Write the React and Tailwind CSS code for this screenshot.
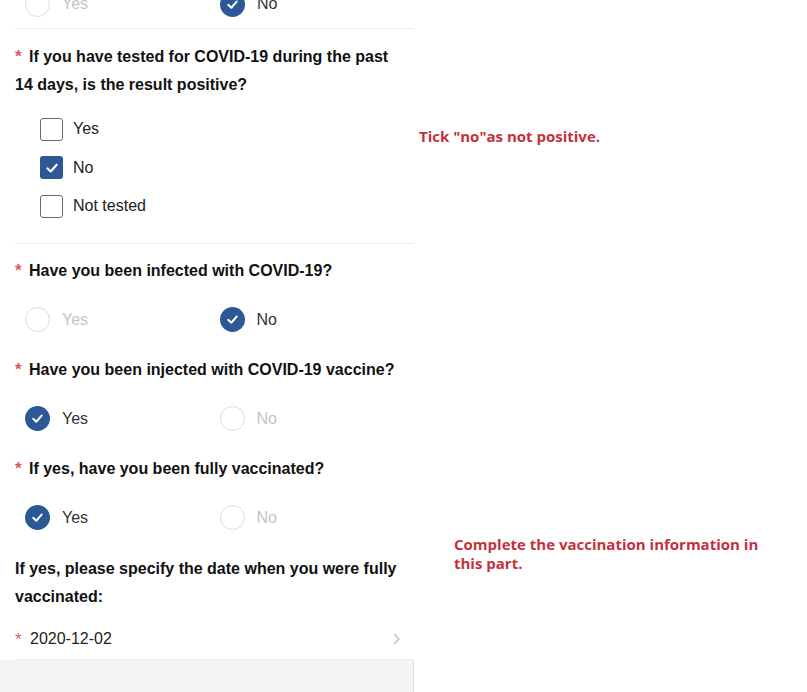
import React from "react";

const BLUE = "bg-[#2c5896]";

function Check({ size = 12 }) {
  return (
    <svg width={size} height={size} viewBox="0 0 12 12" fill="none">
      <path d="M2 6.3 L4.9 9 L10 3.2" stroke="white" strokeWidth="1.8" strokeLinecap="round" strokeLinejoin="round" />
    </svg>
  );
}

function Star({ cls = "" }) {
  return (
    <span className={"inline-block w-[14px] text-[#df5656] text-[17px] " + cls}>*</span>
  );
}

function Radio({ label, checked }) {
  return (
    <div className="w-[195px] flex items-center">
      {checked ? (
        <span className={"w-[25px] h-[25px] rounded-full flex items-center justify-center " + BLUE}>
          <Check size={13} />
        </span>
      ) : (
        <span className="w-[25px] h-[25px] rounded-full border border-[#dcdcdc] bg-white" />
      )}
      <span className={"ml-[12px] text-[16px] " + (checked ? "text-[#333]" : "text-[#c4c4c4]")}>{label}</span>
    </div>
  );
}

function RadioRow({ yes, className = "" }) {
  return (
    <div className={"flex items-center pl-[25px] h-[50px] " + className}>
      <Radio label="Yes" checked={yes} />
      <Radio label="No" checked={!yes} />
    </div>
  );
}

function CheckBox({ label, checked }) {
  return (
    <div className="flex items-center h-[38.5px] pl-[40px]">
      {checked ? (
        <span className={"w-[23px] h-[23px] rounded-[3px] flex items-center justify-center " + BLUE}>
          <Check size={14} />
        </span>
      ) : (
        <span className="w-[23px] h-[23px] rounded-[3px] border border-[#666] bg-white" />
      )}
      <span className="ml-[10px] text-[16px] text-[#222]">{label}</span>
    </div>
  );
}

function Question({ children, star = true, className = "" }) {
  return (
    <p className={"px-[15px] text-[16px] font-bold leading-[28px] text-[#111] " + className}>
      {star && <Star />}
      {children}
    </p>
  );
}

export default function App() {
  return (
    <div
      className="w-[807px] h-[692px] overflow-hidden bg-white flex"
      style={{ fontFamily: '"Liberation Sans", Arial, sans-serif' }}
    >
      <div className="w-[414px] flex flex-col shrink-0">
        <div className="-mt-[20px] h-[49px] ml-[15px] border-b border-[#ececec] flex items-center">
          <div className="-ml-[15px] flex">
            <RadioRow yes={false} className="h-[48px]" />
          </div>
        </div>
        <Question className="pt-[14px]">If you have tested for COVID-19 during the past 14 days, is the result positive?</Question>
        <div className="pt-[11px] pb-[17px] ml-[15px] border-b border-[#ececec]">
          <div className="-ml-[15px]">
            <CheckBox label="Yes" />
            <CheckBox label="No" checked />
            <CheckBox label="Not tested" />
          </div>
        </div>
        <Question className="pt-[13px]">Have you been infected with COVID-19?</Question>
        <RadioRow yes={false} className="mt-[10px]" />
        <Question className="pt-[11px]">Have you been injected with COVID-19 vaccine?</Question>
        <RadioRow yes={true} className="mt-[10px]" />
        <Question className="pt-[11px]">If yes, have you been fully vaccinated?</Question>
        <RadioRow yes={true} className="mt-[10px]" />
        <Question className="pt-[12px]" star={false}>If yes, please specify the date when you were fully vaccinated:</Question>
        <div className="mt-[9px] h-[40px] ml-[15px] pr-[13px] border-b border-[#ececec] flex items-center justify-between">
          <div className="flex items-center">
            <Star cls="w-[15px] relative top-[1px]" />
            <span className="text-[16px] text-[#222]">2020-12-02</span>
          </div>
          <svg width="8" height="12" viewBox="0 0 8 12" fill="none">
            <path d="M1.5 1.5 L6 6 L1.5 10.5" stroke="#c2c2c2" strokeWidth="1.5" strokeLinecap="round" strokeLinejoin="round" />
          </svg>
        </div>
        <div className="flex-1 bg-[#f4f4f4] border-r border-[#e2e2e2]" />
      </div>
      <div
        className="flex-1 flex flex-col text-[#c5303c] font-bold text-[15px] leading-[19px]"
        style={{ fontFamily: '"Open Sans", "Noto Sans", sans-serif' }}
      >
        <p className="mt-[127px] ml-[5px]">Tick "no"as not positive.</p>
        <p className="mt-[389px] ml-[40px] w-[320px]">Complete the vaccination information in this part.</p>
      </div>
    </div>
  );
}
